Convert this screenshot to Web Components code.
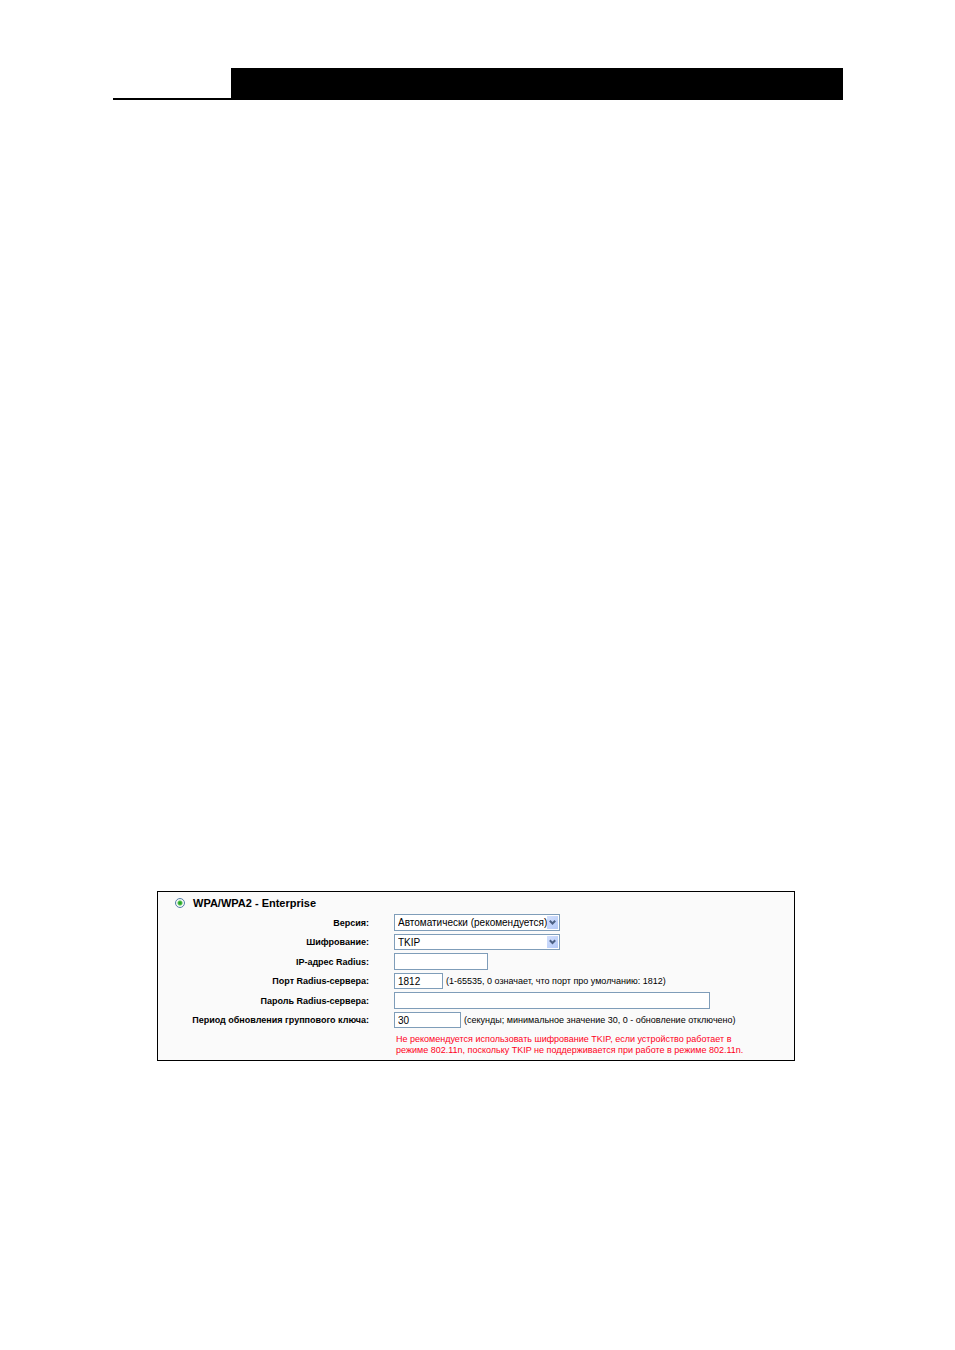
<!DOCTYPE html>
<html lang="ru">
<head>
<meta charset="UTF-8">
<meta name="viewport" content="width=device-width, initial-scale=1.0">
<title>WPA/WPA2 - Enterprise</title>
<style>
  body {
    margin: 0;
    background: #fff;
    color: #000;
    font-family: "Liberation Sans", Arial, sans-serif;
    font-size: 9px;
  }

  main {
    padding: 68px 112px 0 113px;
  }

  security-panel {
    margin: 791px 48px 0 44px;
  }
</style>
</head>
<body>
  <main>
    <page-header></page-header>
    <security-panel heading="WPA/WPA2 - Enterprise">
      <select-field label="Версия:" options="Автоматически (рекомендуется)|WPA|WPA2"></select-field>
      <select-field class="even" label="Шифрование:" options="TKIP|AES"></select-field>
      <text-field label="IP-адрес Radius:" size="94"></text-field>
      <text-field class="even" label="Порт Radius-сервера:" size="49" value="1812">(1-65535, 0 означает, что порт про умолчанию: 1812)</text-field>
      <text-field label="Пароль Radius-сервера:" size="316"></text-field>
      <text-field class="even" label="Период обновления группового ключа:" size="67" value="30">(секунды; минимальное значение 30, 0 - обновление отключено)</text-field>
      <field-warning>Не рекомендуется использовать шифрование TKIP, если устройство работает в<br>режиме 802.11n, поскольку TKIP не поддерживается при работе в режиме 802.11n.</field-warning>
    </security-panel>
  </main>

<script>
const rowStyles = `
  :host {
    display: grid;
    grid-template-columns: 211px 1fr;
    column-gap: 25px;
    align-items: center;
    height: 17px;
    white-space: nowrap;
  }

  :host(.even) {
    height: 16px;
  }

  label {
    text-align: right;
    font-weight: bold;
  }

  input, select {
    box-sizing: border-box;
    height: 100%;
    margin: 0;
    padding: 0 3px;
    border: 1px solid #7f9db9;
    border-radius: 0;
    background: #fff;
    color: #000;
    font-family: inherit;
    font-size: 10px;
    outline: none;
  }
`;

class PageHeader extends HTMLElement {
  connectedCallback() {
    this.attachShadow({ mode: 'open' });
    this.shadowRoot.innerHTML = `
      <style>
        :host {
          display: flex;
          height: 32px;
        }

        .rule {
          box-sizing: border-box;
          width: 118px;
          border-bottom: 2px solid #000;
        }

        .bar {
          flex: 1;
          background: #000;
        }
      </style>
      <div class="rule"></div>
      <div class="bar"></div>
    `;
  }
}

class SecurityPanel extends HTMLElement {
  connectedCallback() {
    this.attachShadow({ mode: 'open' });
    this.shadowRoot.innerHTML = `
      <style>
        :host {
          display: block;
          padding: 4px 0;
          border: 1px solid #000;
          background: #fafafa;
        }

        .heading {
          display: flex;
          align-items: center;
          gap: 8px;
          height: 14px;
          padding-left: 17px;
          font-size: 11px;
          font-weight: bold;
        }

        input {
          appearance: none;
          width: 10px;
          height: 10px;
          margin: 0;
          border: 1px solid #527fa8;
          border-radius: 50%;
          background: radial-gradient(circle, #28a428 0 1px, #55c452 2px, #f4f7f4 3px);
        }

        .rows {
          display: flex;
          flex-direction: column;
          gap: 3px;
          padding-top: 4px;
        }
      </style>
      <div class="heading">
        <input type="radio" id="mode" name="mode" checked>
        <label for="mode">${this.getAttribute('heading')}</label>
      </div>
      <div class="rows"><slot></slot></div>
    `;
  }
}

class SelectField extends HTMLElement {
  connectedCallback() {
    const options = this.getAttribute('options').split('|');
    this.attachShadow({ mode: 'open' });
    this.shadowRoot.innerHTML = `
      <style>
        ${rowStyles}
        .select {
          position: relative;
          width: 166px;
          height: 100%;
        }

        select {
          appearance: none;
          display: block;
          width: 100%;
        }

        svg {
          position: absolute;
          top: 2px;
          right: 2px;
          width: 11px;
          height: calc(100% - 4px);
          background: linear-gradient(135deg, #d3e0fd, #b4c9f7);
          pointer-events: none;
        }
      </style>
      <label for="field">${this.getAttribute('label')}</label>
      <div class="select">
        <select id="field">${options.map(o => `<option>${o}</option>`).join('')}</select>
        <svg viewBox="0 0 11 12"><path d="M2.8 4.3 5.5 7 8.2 4.3" fill="none" stroke="#4d6185" stroke-width="2"/></svg>
      </div>
    `;
  }
}

class TextField extends HTMLElement {
  connectedCallback() {
    this.attachShadow({ mode: 'open' });
    this.shadowRoot.innerHTML = `
      <style>
        ${rowStyles}
        .control {
          display: flex;
          align-items: center;
          gap: 3px;
          height: 100%;
        }

        input {
          width: ${this.getAttribute('size')}px;
        }
      </style>
      <label for="field">${this.getAttribute('label')}</label>
      <div class="control">
        <input type="text" id="field" value="${this.getAttribute('value') || ''}">
        <span><slot></slot></span>
      </div>
    `;
  }
}

class FieldWarning extends HTMLElement {
  connectedCallback() {
    this.attachShadow({ mode: 'open' });
    this.shadowRoot.innerHTML = `
      <style>
        :host {
          display: block;
          padding: 3px 0 0 238px;
          color: #ff0022;
          line-height: 11px;
          white-space: nowrap;
        }
      </style>
      <slot></slot>
    `;
  }
}

customElements.define('page-header', PageHeader);
customElements.define('security-panel', SecurityPanel);
customElements.define('select-field', SelectField);
customElements.define('text-field', TextField);
customElements.define('field-warning', FieldWarning);
</script>
</body>
</html>
